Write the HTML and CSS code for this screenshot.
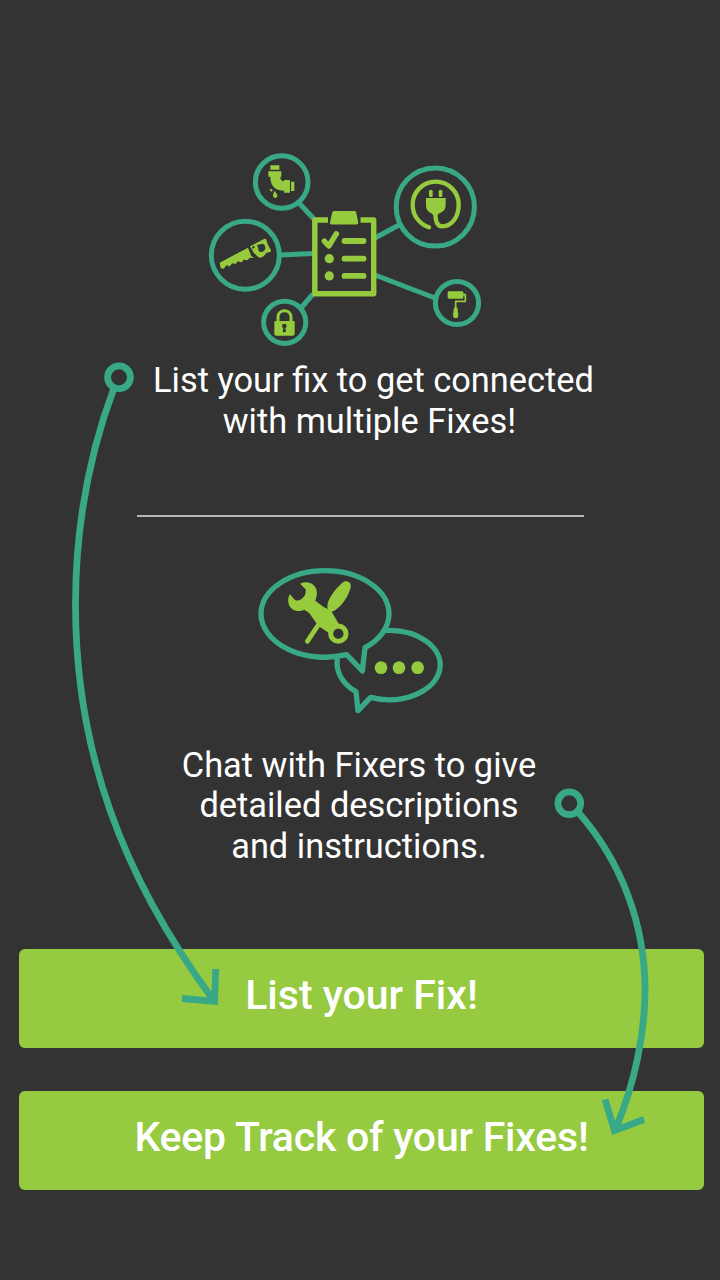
FILE: index.html
```html
<!DOCTYPE html>
<html lang="en">
<head>
<meta charset="utf-8">
<title>Fixes</title>
<link rel="stylesheet" href="styles.css">
</head>
<body>
<main class="screen">
  <section class="feature feature-list">
    <svg class="network" viewBox="200 145 290 210" fill="none">
      <g class="teal" stroke-width="5">
        <path d="M299 203l15 16M280 255l33-1.5M301 308l12-14M375 238l24-13M375 275l60 23"/>
        <circle cx="281.7" cy="182" r="26.3"/>
        <circle cx="245.3" cy="255.3" r="34"/>
        <circle cx="284.7" cy="322.3" r="21.1"/>
        <circle cx="435.3" cy="207" r="39.1"/>
        <circle cx="457" cy="303" r="21.6"/>
      </g>
      <g transform="translate(200 145) scale(.33333)" class="lime-fill">
        <path d="M211 61h27v13h-27zM205 79h39v16h-3q0 13 11 14v-4h18v38h-18v-6q-41-1-41-42h-6zM273 110h10v28h-10z"/>
        <path d="M209 131q8 0 9 5-2 6-7 2zM223 138q9 8 9 15-1 6-6 6-7-1-7-7 0-4 4-14z"/>
      </g>
      <g transform="translate(200 235) scale(.33333)" class="lime-fill">
        <path d="M59 83l85-45 10 25 8 6-12-1-8 8-11-2-6 8-12-3-6 8-11-2-6 9-11-3-8 10-9-1z"/>
        <path fill-rule="evenodd" d="M150 34l42-22q5-2 7 2l4 14 10 18q1 5-5 6l-10 2q-5 12-15 14-10 0-15-9l-6-4zM157 35q-2 5 2 6l4-2q2-5-2-6zM171 31q4 6 4 12 1 10 11 8 10-4 10-12 0-10-8-13-7 0-17 5z"/>
        <path fill-rule="evenodd" d="M223 262q0-4 4-4h53q4 0 4 4v34q0 6-6 6h-49q-6 0-6-6zM246 274q0 3 4 5l-2 11q5 3 10 0l-2-11q4-2 4-5c0-10-14-10-14 0z"/>
        <path class="lime" stroke-width="9" fill="none" d="M234 260v-14c0-25 39-25 39 0v14"/>
      </g>
      <g transform="translate(370 155) scale(.33333)">
        <path class="lime" stroke-width="13" stroke-linecap="round" d="M177 217C149 207 128 183 128 149A69 69 0 0 1 266 149C266 185 246 214 217 214C201 214 197 200 196 176"/>
        <path class="lime-fill" d="M168 129h59v22q0 18-19 24l-6 5h-12l-6-5q-16-6-16-24z"/>
        <rect class="lime-fill" x="177" y="105" width="11" height="21" rx="4"/>
        <rect class="lime-fill" x="206" y="105" width="11" height="21" rx="4"/>
        <rect class="lime-fill" x="233" y="409" width="47" height="22" rx="4"/>
        <path class="lime" stroke-width="5" stroke-linejoin="round" d="M279 419h7v20h-29v20"/>
        <path class="lime-fill" d="M252 458q5-3 10 0 1 7 2 13l1 12q-1 7-8 7t-8-7l1-12q1-6 2-13z"/>
      </g>
      <path class="lime" stroke-width="5.4" stroke-linejoin="round" d="M328 220H314.8V293.7H373.7V220H360.5"/>
      <path class="lime-fill" d="M334 211h20.5q1.5 0 1.8 1.5l1.9 10q.2 2-1.7 2h-25q-1.8 0-1.5-2l2.2-10q.3-1.5 1.8-1.5z"/>
      <path class="lime" stroke-width="5.8" stroke-linecap="round" d="M344.5 241h19M344.5 258.7h19M344.5 275.9h19"/>
      <path class="lime" stroke-width="5.4" stroke-linecap="round" stroke-linejoin="round" d="M324.3 241.2l4.5 4.8 7.6-12.200"/>
      <circle class="lime-fill" cx="329.3" cy="258.7" r="4.6"/>
      <circle class="lime-fill" cx="329.3" cy="275.9" r="4.6"/>
    </svg>
    <p class="copy"><span class="lead">List your fix to get connected</span><span class="follow">with multiple Fixes!</span></p>
  </section>
  <hr class="divider">
  <section class="feature feature-chat">
    <svg class="chat" viewBox="0 0 600 480" fill="none">
      <g class="teal" stroke-width="16" stroke-linejoin="round">
        <path d="M404 211.5A153 104 0 1 1 362 412L324 452L318 395C282 375 256 340 262 296"/>
        <path class="bubble" d="M290 284L337 333L345 263A192 130 0 0 0 417 162A192 130 0 0 0 33 162A192 130 0 0 0 290 284Z"/>
      </g>
      <g class="lime-fill">
        <circle cx="393" cy="323" r="19"/><circle cx="447" cy="323" r="19"/><circle cx="503" cy="323" r="19"/>
        <path d="M150 71C172 61 200 70 201 99Q200 112 196 122L222 142L242 150L266 191L236 218L205 198L178 160L163 149C145 159 117 151 115 126Q113 112 120 103L134 119Q146 126 158 114Q169 106 167 88Z"/>
        <path d="M276 69C288 57 306 67 302 82C296 108 275 140 253 152L240 157L232 142C230 120 254 89 276 69Z"/>
      </g>
      <path class="lime" stroke-width="14" stroke-linecap="round" d="M206 193L172 244"/>
      <circle class="lime ring" cx="265" cy="221" r="23" stroke-width="15"/>
    </svg>
    <p class="copy"><span>Chat with Fixers to give</span><span>detailed descriptions</span><span>and instructions.</span></p>
  </section>
  <nav class="actions">
    <button class="action" type="button">List your Fix!</button>
    <button class="action action-track" type="button">Keep Track of your Fixes!</button>
  </nav>
  <svg class="arrows teal" viewBox="0 0 720 1280" fill="none" stroke-width="6.8">
    <circle cx="119" cy="377.3" r="11.4"/>
    <path d="M114 388C87 460 75.5 532 75.5 605C75.5 750 122 876 212 998M182 998.5L214.6 1001.3L215.7 969"/>
    <circle cx="569.3" cy="803.3" r="11.4"/>
    <path d="M578 812C622 862 645 925 645 990C645 1035 634 1085 616 1128M605 1099.5L614.5 1130.5L644 1119.5"/>
  </svg>
</main>
</body>
</html>
```
FILE: styles.css
```css
body { margin: 0; background: #333; }

.screen {
  position: relative;
  box-sizing: border-box;
  width: 720px;
  height: 1280px;
  padding: 145px 16px 0 19px;
  display: flex;
  flex-direction: column;
  overflow: hidden;
  background: #333;
  color: #fff;
  font-family: Roboto, "Liberation Sans", sans-serif;
}

.feature { display: flex; flex-direction: column; }
.feature-list { height: 369.5px; }
.feature-chat { height: 389.5px; padding-top: 43px; }

.network { width: 290px; height: 210px; margin-left: 181px; flex: none; }
.chat { width: 200px; height: 160px; margin-left: 231px; flex: none; }

.copy {
  width: 680px;
  margin: 5px 0 0;
  font-size: 34.4px;
  line-height: 40.7px;
  text-align: center;
}
.copy span { display: block; white-space: nowrap; }
.feature-chat .copy { margin-top: 25px; }
.lead { padding-left: 29px; }
.follow { padding-left: 21px; }

.divider {
  width: 447px;
  height: 2px;
  margin: 0 0 0 118px;
  border: 0;
  background: #b5b5b5;
}

.actions { display: flex; flex-direction: column; gap: 43px; }
.action {
  height: 99px;
  padding: 0 0 8px;
  border: 0;
  border-radius: 6px;
  background: #96ca41;
  color: #fff;
  font: 500 41px Roboto, "Liberation Sans", sans-serif;
}
.action-track { letter-spacing: -0.22px; }

.arrows { position: absolute; left: 0; top: 0; width: 720px; height: 1280px; pointer-events: none; }
.teal { stroke: #38a886; }
.lime { stroke: #96cb3e; }
.lime-fill { fill: #96cb3e; }
.lime-fill .lime { stroke: #96cb3e; }
.ring, .bubble { fill: #333; }
```
